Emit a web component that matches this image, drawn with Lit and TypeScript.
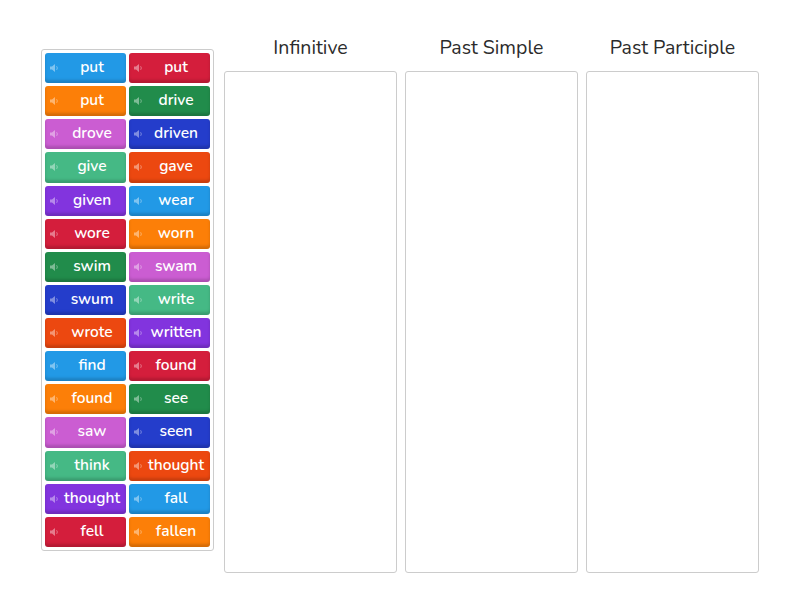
import { LitElement, html, css } from 'lit';
import { customElement } from 'lit/decorators.js';

const palette = ['blue', 'red', 'orange', 'green', 'pink', 'navy', 'teal', 'flame', 'purple'];

const words = [
  'put', 'put', 'put', 'drive', 'drove', 'driven', 'give', 'gave', 'given', 'wear',
  'wore', 'worn', 'swim', 'swam', 'swum', 'write', 'wrote', 'written', 'find', 'found',
  'found', 'see', 'saw', 'seen', 'think', 'thought', 'thought', 'fall', 'fell', 'fallen',
];

const columns = ['Infinitive', 'Past Simple', 'Past Participle'];

@customElement('app-root')
export class AppRoot extends LitElement {
  static styles = css`
    :host {
      display: block;
      width: 800px;
      height: 600px;
      background: #fff;
      font-family: 'Nunito', 'Lato', 'Noto Sans', sans-serif;
    }

    .page {
      display: flex;
      align-items: flex-start;
      padding: 34px 0 0 41px;
    }

    .tray {
      box-sizing: border-box;
      width: 173px;
      height: 502px;
      margin-top: 15px;
      margin-right: 10px;
      padding: 3px;
      border: 1px solid #ccc;
      border-radius: 3px;
      display: grid;
      grid-template-columns: 81px 81px;
      grid-auto-rows: 30.14px;
      column-gap: 3px;
      row-gap: 3px;
    }

    .tile {
      display: flex;
      align-items: center;
      border-radius: 3px;
      color: #fff;
      font-weight: 600;
      font-size: 15.5px;
      padding-left: 4px;
      padding-bottom: 3px;
      box-sizing: border-box;
      white-space: nowrap;
      box-shadow: inset 0 -3px 3px rgba(0, 0, 0, 0.16);
    }

    .tile svg {
      flex: none;
      width: 10px;
      height: 10px;
      margin-top: 3px;
      opacity: 0.42;
    }

    .tile span {
      flex: 1;
      text-align: center;
      padding-right: 1px;
    }

    .blue { background: #2299e6; }
    .red { background: #d41e3c; }
    .orange { background: #fc7f08; }
    .green { background: #218c4b; }
    .pink { background: #cb5dd2; }
    .navy { background: #243dcb; }
    .teal { background: #45b985; }
    .flame { background: #ec4810; }
    .purple { background: #8234de; }

    .column {
      display: flex;
      flex-direction: column;
      width: 173px;
      margin-right: 8px;
    }

    .column h2 {
      margin: 0;
      height: 37px;
      line-height: 27px;
      text-align: center;
      font-weight: 400;
      font-size: 19.5px;
      color: #2b2b2b;
    }

    .drop {
      box-sizing: border-box;
      height: 502px;
      border: 1px solid #ccc;
      border-radius: 3px;
    }
  `;

  render() {
    return html`
      <div class="page">
        <div class="tray">
          ${words.map(
            (w, i) => html`
              <div class="tile ${palette[i % palette.length]}">
                <svg viewBox="0 0 10 10"><path fill="#fff" d="M1 3.5h2L6 1v8L3 6.5H1zM7.2 3.5c.8.8.8 2.2 0 3l.6.6c1.2-1.2 1.2-3 0-4.2z" /></svg>
                <span>${w}</span>
              </div>
            `,
          )}
        </div>
        ${columns.map(
          (c) => html`
            <div class="column">
              <h2>${c}</h2>
              <div class="drop"></div>
            </div>
          `,
        )}
      </div>
    `;
  }
}
